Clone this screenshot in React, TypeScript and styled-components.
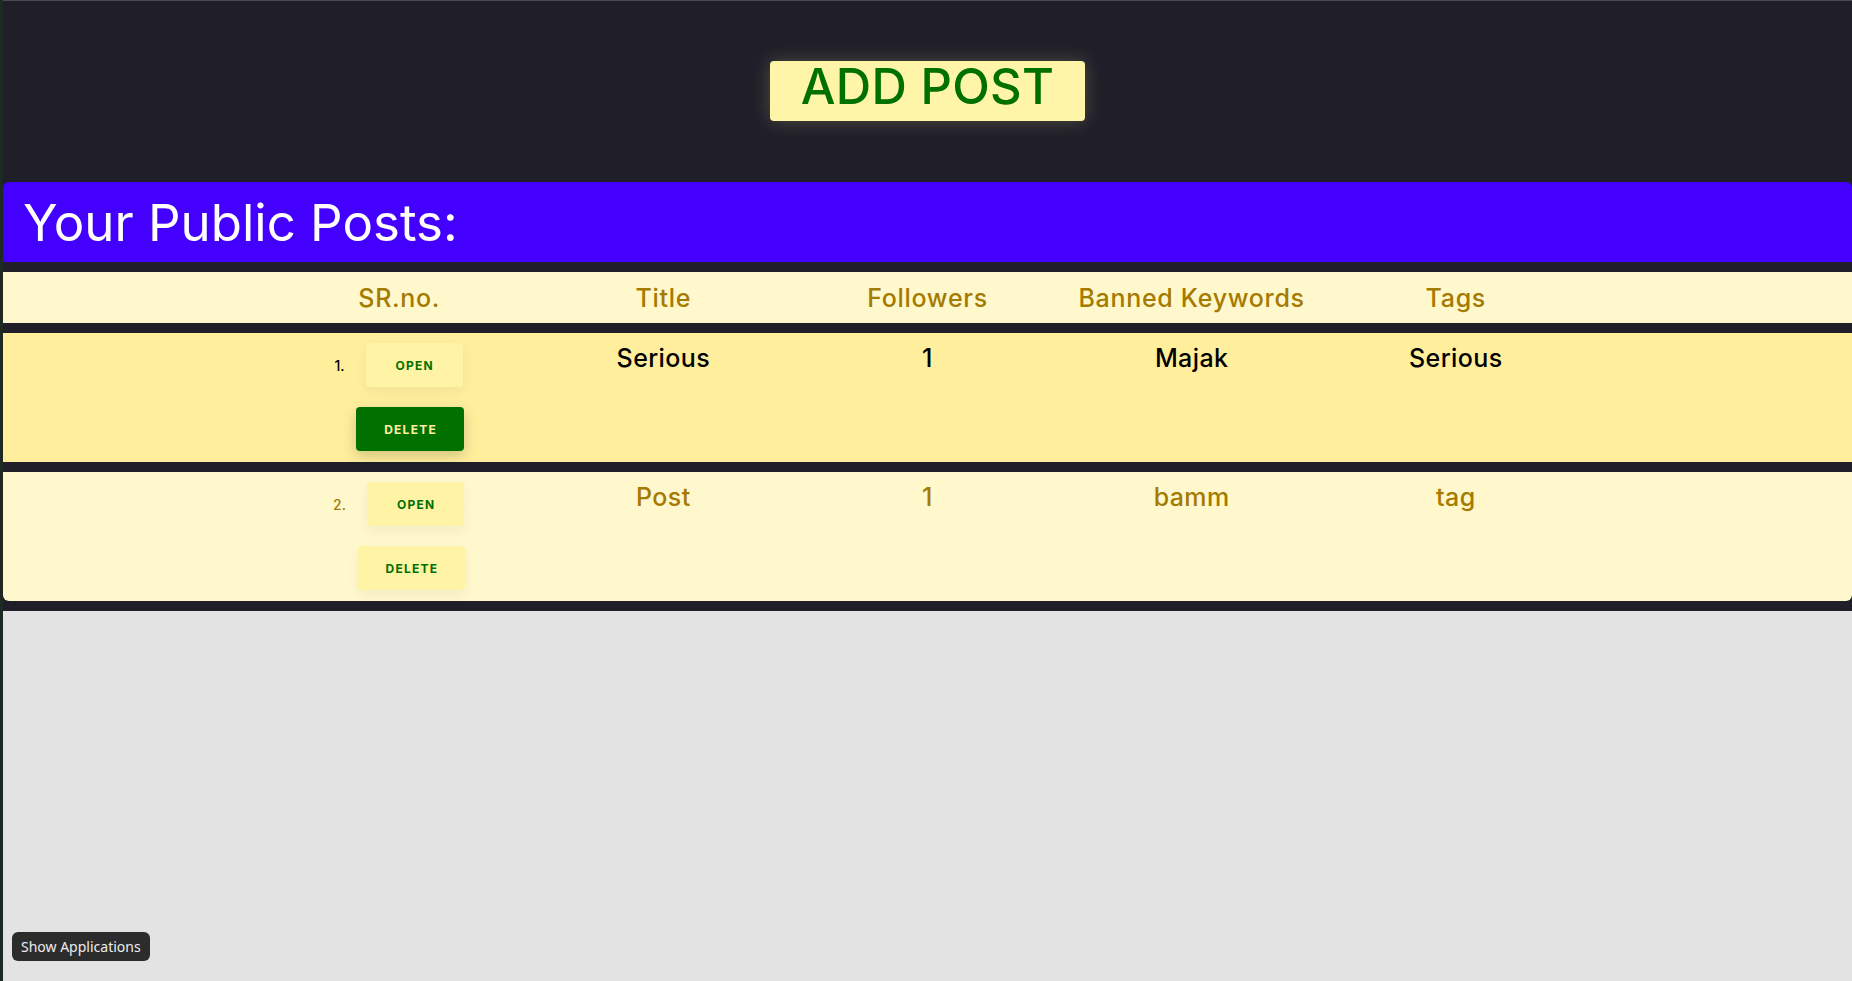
import React from "react";
import styled, { createGlobalStyle } from "styled-components";

const GlobalStyle = createGlobalStyle`
  html, body {
    margin: 0;
    padding: 0;
  }
  body {
    background: #e3e3e3;
    min-height: 100vh;
    border-left: 3px solid #1d2922;
    font-family: Inter, "Open Sans", sans-serif;
  }
`;

const Dashboard = styled.div`
  background: #201f29;
  border-top: 1px solid #4a4a4f;
  padding-bottom: 10px;
`;

const TopBar = styled.div`
  display: flex;
  justify-content: center;
  padding: 60px 0 61px;
`;

const AddPostButton = styled.button`
  box-sizing: border-box;
  height: 60px;
  padding: 0 31px 8px;
  border: none;
  border-radius: 4px;
  background: #fff5a8;
  color: #007000;
  font-family: Inter, sans-serif;
  font-size: 49px;
  font-weight: 500;
  letter-spacing: 0.3px;
  line-height: 52px;
  cursor: pointer;
  box-shadow: 0 0 18px rgba(255, 240, 170, 0.22);
`;

const Panel = styled.section`
  display: flex;
  flex-direction: column;
  gap: 10px;
  border-radius: 6px;
  overflow: hidden;
`;

const TitleBar = styled.h1`
  margin: 0;
  height: 80px;
  display: flex;
  align-items: center;
  padding-left: 20px;
  background: #4400ff;
  color: #ffffff;
  font-size: 51px;
  font-weight: 400;
`;

const Row = styled.div<{ $bg: string }>`
  display: grid;
  grid-template-columns: repeat(7, 1fr);
  background: ${(p) => p.$bg};
  & > :first-child {
    grid-column-start: 2;
  }
`;

const HeadRow = styled(Row)`
  height: 51px;
  align-items: center;
  color: #a57a00;
  font-size: 25px;
  font-weight: 500;
  letter-spacing: 0.7px;
  text-align: center;
`;

const PostRow = styled(Row)`
  padding: 10px 0 11px;
  align-items: start;
`;

const SrCell = styled.div`
  display: flex;
  justify-content: center;
`;

const SrBlock = styled.div`
  display: inline-flex;
  flex-direction: column;
  align-items: flex-end;
  gap: 20px;
`;

const SrLine = styled.div`
  display: flex;
  align-items: center;
  gap: 21px;
`;

const Num = styled.span<{ $color: string }>`
  color: ${(p) => p.$color};
  font-size: 14px;
  font-weight: 500;
`;

const ActionButton = styled.button<{ $filled?: boolean }>`
  height: 44px;
  padding: 0 27px 0 28px;
  border: none;
  border-radius: 4px;
  background: ${(p) => (p.$filled ? "#007000" : "#fff3a6")};
  color: ${(p) => (p.$filled ? "#fff0a0" : "#007000")};
  font-family: Inter, sans-serif;
  font-size: 12px;
  font-weight: 700;
  letter-spacing: 1.25px;
  cursor: pointer;
  box-shadow: 0 5px 14px rgba(0, 0, 0, ${(p) => (p.$filled ? 0.18 : 0.05)});
`;

const OpenButton = styled(ActionButton)`
  padding: 0 29px 0 30px;
  margin-right: 1px;
`;

const TextCell = styled.div<{ $color: string }>`
  text-align: center;
  color: ${(p) => p.$color};
  font-size: 25px;
  font-weight: 500;
  letter-spacing: 0.4px;
  line-height: 28px;
  padding-top: 1px;
`;

const Tooltip = styled.div`
  position: fixed;
  left: 12px;
  top: 932px;
  height: 29px;
  padding: 0 9px;
  border-radius: 6px;
  background: #2c2c2c;
  color: #ececec;
  font-family: "Noto Sans", sans-serif;
  font-size: 14px;
  line-height: 29px;
`;

type Post = {
  title: string;
  followers: number;
  banned: string;
  tags: string;
};

const posts: Post[] = [
  { title: "Serious", followers: 1, banned: "Majak", tags: "Serious" },
  { title: "Post", followers: 1, banned: "bamm", tags: "tag" },
];

const App = () => {
  const active = 0;
  return (
    <>
      <GlobalStyle />
      <Dashboard>
        <TopBar>
          <AddPostButton>ADD POST</AddPostButton>
        </TopBar>
        <Panel>
          <TitleBar>Your Public Posts:</TitleBar>
          <HeadRow $bg="#fff8cc">
            <div>SR.no.</div>
            <div>Title</div>
            <div>Followers</div>
            <div>Banned Keywords</div>
            <div>Tags</div>
          </HeadRow>
          {posts.map((post, i) => {
            const isActive = i === active;
            const color = isActive ? "#000000" : "#a57a00";
            return (
              <PostRow key={i} $bg={isActive ? "#ffee9c" : "#fff8cc"}>
                <SrCell>
                  <SrBlock>
                    <SrLine>
                      <Num $color={color}>{i + 1}.</Num>
                      <OpenButton>OPEN</OpenButton>
                    </SrLine>
                    <ActionButton $filled={isActive}>DELETE</ActionButton>
                  </SrBlock>
                </SrCell>
                <TextCell $color={color}>{post.title}</TextCell>
                <TextCell $color={color}>{post.followers}</TextCell>
                <TextCell $color={color}>{post.banned}</TextCell>
                <TextCell $color={color}>{post.tags}</TextCell>
              </PostRow>
            );
          })}
        </Panel>
      </Dashboard>
      <Tooltip>Show Applications</Tooltip>
    </>
  );
};

export default App;
